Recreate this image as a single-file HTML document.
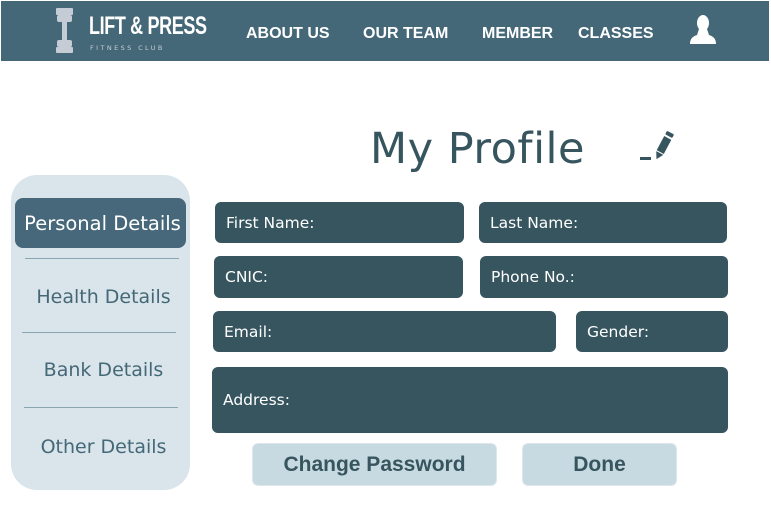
<!DOCTYPE html>
<html><head><style>
*{margin:0;padding:0;box-sizing:border-box}
body{width:771px;height:505px;background:#fff;position:relative;overflow:hidden;font-family:"DejaVu Sans","Liberation Sans",sans-serif}
.hdr{position:absolute;left:1px;top:1px;width:768px;height:60px;background:#456878}
.nav{position:absolute;top:25px;color:#fff;font-family:"Liberation Sans",sans-serif;font-weight:bold;font-size:16px}
.abs{position:absolute}
.f{position:absolute;background:#37555f;border-radius:6px;color:#fff;font-size:15.5px;padding-left:11px;display:flex;align-items:center}
.side{position:absolute;left:11px;top:175px;width:179px;height:315px;background:#d9e5ea;border-radius:26px}
.sl{position:absolute;height:1px;background:#8aa6b2}
.si{position:absolute;color:#456878;font-size:19px;width:179px;text-align:center;left:14px}
.btn{position:absolute;background:#c8dae1;border-radius:6px;color:#37555f;font-family:"Liberation Sans",sans-serif;font-weight:bold;font-size:21px;display:flex;align-items:center;justify-content:center;border:1px solid #dde7eb}
</style></head><body>
<div class="hdr"></div>
<div class="abs" style="left:56px;top:8px;width:17px;height:7px;background:#c6ccd6;border-radius:1px"></div>
<div class="abs" style="left:57px;top:15px;width:15px;height:7px;background:#c6ccd6;border-radius:2px"></div>
<div class="abs" style="left:62px;top:22px;width:5px;height:18px;background:#c6ccd6"></div>
<div class="abs" style="left:57px;top:40px;width:15px;height:7px;background:#c6ccd6;border-radius:2px"></div>
<div class="abs" style="left:56px;top:47px;width:17px;height:6px;background:#c6ccd6;border-radius:1px"></div>
<div class="abs" style="left:89px;top:11px;color:#fff;font-family:'Liberation Sans',sans-serif;font-weight:bold;font-size:25px;transform:scaleX(0.72);transform-origin:left;letter-spacing:-0.5px;line-height:30px">LIFT &amp; PRESS</div>
<div class="abs" style="left:90px;top:44px;color:#c6ccd6;font-size:6.5px;letter-spacing:2.4px">FITNESS CLUB</div>
<div class="nav" style="left:246px">ABOUT US</div>
<div class="nav" style="left:363px">OUR TEAM</div>
<div class="nav" style="left:482px">MEMBER</div>
<div class="nav" style="left:578px">CLASSES</div>
<svg class="abs" style="left:688px;top:14px" width="30" height="32" viewBox="0 0 30 32"><ellipse cx="15" cy="9" rx="6" ry="8" fill="#fff"/><path d="M11 15 L19 15 L21 21 Q28 23 28 30 L2 30 Q2 23 9 21Z" fill="#fff"/></svg>
<div class="abs" style="left:370px;top:124px;color:#37555f;font-size:43px;letter-spacing:0.5px">My Profile</div>
<svg class="abs" style="left:638px;top:128px" width="40" height="36" viewBox="0 0 40 36"><rect x="2" y="29" width="11" height="3" fill="#37555f"/><g transform="rotate(28 26 17)"><rect x="22" y="3" width="8" height="4" rx="1" fill="#37555f"/><rect x="22" y="9" width="8" height="16" fill="#37555f"/><path d="M22 26 L30 26 L26 33Z" fill="#37555f"/></g></svg>
<div class="side"></div>
<div class="abs" style="left:15px;top:198px;width:171px;height:50px;background:#46687a;border-radius:8px;color:#fff;font-size:19.5px;display:flex;align-items:center;justify-content:center;padding-left:4px">Personal Details</div>
<div class="sl" style="left:25px;top:258px;width:154px"></div>
<div class="si" style="top:286px">Health Details</div>
<div class="sl" style="left:22px;top:332px;width:154px"></div>
<div class="si" style="top:359px">Bank Details</div>
<div class="sl" style="left:24px;top:407px;width:154px"></div>
<div class="si" style="top:436px">Other Details</div>
<div class="f" style="left:215px;top:202px;width:249px;height:41px">First Name:</div>
<div class="f" style="left:479px;top:202px;width:248px;height:41px">Last Name:</div>
<div class="f" style="left:214px;top:256px;width:249px;height:42px">CNIC:</div>
<div class="f" style="left:480px;top:256px;width:248px;height:42px">Phone No.:</div>
<div class="f" style="left:213px;top:311px;width:343px;height:41px">Email:</div>
<div class="f" style="left:576px;top:311px;width:152px;height:41px">Gender:</div>
<div class="f" style="left:212px;top:367px;width:516px;height:66px">Address:</div>
<div class="btn" style="left:252px;top:443px;width:245px;height:43px">Change Password</div>
<div class="btn" style="left:522px;top:443px;width:155px;height:43px">Done</div>
</body></html>
